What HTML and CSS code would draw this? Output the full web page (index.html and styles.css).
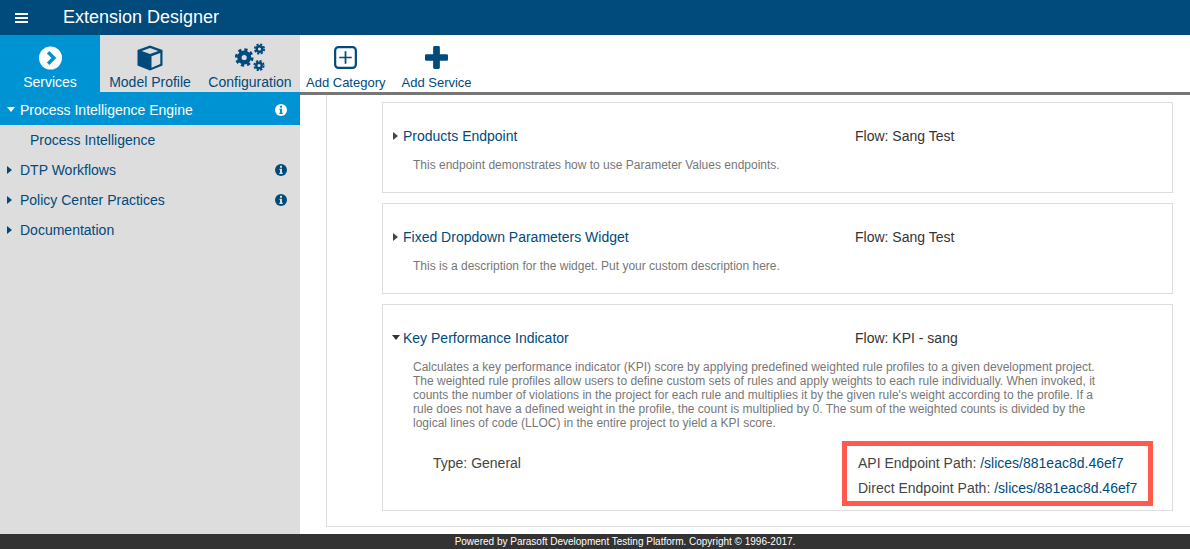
FILE: index.html
```html
<!DOCTYPE html>
<html lang="en">
<head>
<meta charset="utf-8">
<title>Extension Designer</title>
<link rel="stylesheet" href="styles.css">
</head>
<body>
<div class="app">
  <header class="topbar">
    <svg class="burger" viewBox="0 0 13 10" width="13" height="10"><path d="M0 0h13v2H0zM0 4h13v2H0zM0 8h13v2H0z" fill="#fff"/></svg>
    <h1 class="app-title">Extension Designer</h1>
  </header>
  <div class="workspace">
    <aside class="sidebar">
      <nav class="tabs">
        <a class="tab tab-active">
          <svg class="tab-icon" viewBox="0 0 24 24" width="23" height="23"><circle cx="12" cy="12" r="12" fill="#fff"/><path d="M9.500 6l6 6-6 6" fill="none" stroke="#0093d3" stroke-width="3.600"/></svg>
          <span>Services</span>
        </a>
        <a class="tab">
          <svg class="tab-icon" viewBox="0 0 26 26" width="26" height="26"><path d="M13 .5L25.500 5V20.500L13 25.500 .5 20.500V5z" fill="#004a7c"/><path d="M13 3L21.300 6 13 9 4.700 6z" fill="#ddd"/><path d="M14.500 11.300L23.300 8V19L14.500 22.800z" fill="#ddd"/></svg>
          <span>Model Profile</span>
        </a>
        <a class="tab">
          <svg class="tab-icon tab-icon-cogs" viewBox="0 0 30 26" width="30" height="26"><g fill="none" stroke="#004a7c"><circle cx="9.200" cy="12.500" r="4.800" stroke-width="4.400"/><circle cx="9.200" cy="12.500" r="7.900" stroke-width="2.800" stroke-dasharray="3.200 2.990"/><circle cx="24.500" cy="4" r="2.800" stroke-width="2.400"/><circle cx="24.500" cy="4" r="4.700" stroke-width="1.800" stroke-dasharray="2.200 1.490"/><circle cx="24" cy="20.500" r="2.800" stroke-width="2.400"/><circle cx="24" cy="20.500" r="4.700" stroke-width="1.800" stroke-dasharray="2.200 1.490"/></g></svg>
          <span>Configuration</span>
        </a>
      </nav>
      <ul class="tree">
        <li class="tree-row tree-row-active">
          <span class="caret caret-down caret-white"></span>
          <span class="tree-label">Process Intelligence Engine</span>
          <svg class="info" viewBox="0 0 12 12" width="12" height="12"><circle cx="6" cy="6" r="6" fill="#fff"/><path d="M5 1.800h2v2H5zM4.500 4.800h2.500v4h.8v1.200H4.300V8.800H5V6H4.500z" fill="#0093d3"/></svg>
        </li>
        <li class="tree-row tree-child"><span class="tree-label">Process Intelligence</span></li>
        <li class="tree-row">
          <span class="caret caret-right"></span>
          <span class="tree-label">DTP Workflows</span>
          <svg class="info" viewBox="0 0 12 12" width="12" height="12"><circle cx="6" cy="6" r="6" fill="#004a7c"/><path d="M5 1.800h2v2H5zM4.500 4.800h2.500v4h.8v1.200H4.300V8.800H5V6H4.500z" fill="#ddd"/></svg>
        </li>
        <li class="tree-row">
          <span class="caret caret-right"></span>
          <span class="tree-label">Policy Center Practices</span>
          <svg class="info" viewBox="0 0 12 12" width="12" height="12"><circle cx="6" cy="6" r="6" fill="#004a7c"/><path d="M5 1.800h2v2H5zM4.500 4.800h2.500v4h.8v1.200H4.300V8.800H5V6H4.500z" fill="#ddd"/></svg>
        </li>
        <li class="tree-row">
          <span class="caret caret-right"></span>
          <span class="tree-label">Documentation</span>
        </li>
      </ul>
    </aside>
    <main class="main">
      <div class="toolbar">
        <a class="tool">
          <svg class="tool-icon" viewBox="0 0 24 24" width="23" height="23"><rect x="1.200" y="1.200" width="21.600" height="21.600" rx="3.500" fill="none" stroke="#004a7c" stroke-width="2.300"/><path d="M12 5.500v13M5.500 12h13" stroke="#004a7c" stroke-width="1.800"/></svg>
          <span>Add Category</span>
        </a>
        <a class="tool">
          <svg class="tool-icon" viewBox="0 0 24 24" width="23" height="23"><path d="M8.500 1.500A1.500 1.500 0 0 1 10 0h4a1.500 1.500 0 0 1 1.500 1.500V8.500H22.500A1.500 1.500 0 0 1 24 10v4a1.500 1.500 0 0 1-1.500 1.500H15.500V22.500A1.500 1.500 0 0 1 14 24h-4a1.500 1.500 0 0 1-1.500-1.500V15.500H1.500A1.500 1.500 0 0 1 0 14v-4A1.500 1.500 0 0 1 1.500 8.500H8.500z" fill="#004a7c"/></svg>
          <span>Add Service</span>
        </a>
      </div>
      <section class="panel">
        <article class="card">
          <div class="card-head">
            <span class="card-title"><span class="caret caret-right caret-dark"></span>Products Endpoint</span>
            <span class="card-flow">Flow: Sang Test</span>
          </div>
          <p class="card-desc">This endpoint demonstrates how to use Parameter Values endpoints.</p>
        </article>
        <article class="card">
          <div class="card-head">
            <span class="card-title"><span class="caret caret-right caret-dark"></span>Fixed Dropdown Parameters Widget</span>
            <span class="card-flow">Flow: Sang Test</span>
          </div>
          <p class="card-desc">This is a description for the widget. Put your custom description here.</p>
        </article>
        <article class="card card-open">
          <div class="card-head">
            <span class="card-title"><span class="caret caret-down caret-dark"></span>Key Performance Indicator</span>
            <span class="card-flow">Flow: KPI - sang</span>
          </div>
          <p class="card-desc">Calculates a key performance indicator (KPI) score by applying predefined weighted rule profiles to a given development project.<br>The weighted rule profiles allow users to define custom sets of rules and apply weights to each rule individually. When invoked, it<br>counts the number of violations in the project for each rule and multiplies it by the given rule's weight according to the profile. If a<br>rule does not have a defined weight in the profile, the count is multiplied by 0. The sum of the weighted counts is divided by the<br>logical lines of code (LLOC) in the entire project to yield a KPI score.</p>
          <div class="card-meta">
            <span class="meta-type">Type: General</span>
            <div class="meta-paths">
              <div class="meta-path">API Endpoint Path: <a class="path-link">/slices/881eac8d.46ef7</a></div>
              <div class="meta-path">Direct Endpoint Path: <a class="path-link">/slices/881eac8d.46ef7</a></div>
            </div>
          </div>
          <div class="highlight"></div>
        </article>
      </section>
    </main>
  </div>
  <footer class="footer">Powered by Parasoft Development Testing Platform. Copyright © 1996-2017.</footer>
</div>
</body>
</html>
```
FILE: styles.css
```css
* { box-sizing: border-box; }
html, body { margin: 0; padding: 0; height: 100%; overflow: hidden; }
body { font-family: "Liberation Sans", Arial, sans-serif; font-size: 14px; color: #004a7c; background: #fff; }
.app { display: flex; flex-direction: column; height: 549px; }

.topbar { flex: 0 0 35px; background: #004a7c; display: flex; align-items: center; padding-left: 15px; }
.burger { display: block; }
.app-title { margin: 0 0 0 35px; font-size: 18px; font-weight: 400; color: #fff; line-height: 35px; }

.workspace { flex: 1; display: flex; min-height: 0; }

.sidebar { flex: 0 0 300px; background: #ddd; }
.tabs { display: flex; height: 57px; }
.tab { flex: 0 0 100px; display: flex; flex-direction: column; align-items: center; padding-top: 10px; color: #004a7c; }
.tab-active { background: #0093d3; color: #fff; }
.tab-icon { display: block; height: 26px; overflow: visible; }
.tab span { display: block; margin-top: 3px; line-height: 16px; }

.tree { list-style: none; margin: 0; padding: 0; }
.tree-row { height: 30px; display: flex; align-items: center; padding-left: 6px; }
.tree-row-active { height: 33px; padding-top: 2px; background: #0093d3; color: #fff; }
.tree-child { padding-left: 30px; }
.tree-row .caret { margin-right: 8px; }
.tree-row .caret-down { margin-left: 1px; margin-right: 5px; }
.tree-label { flex: 1; }
.info { margin-right: 13px; display: block; }

.caret { display: inline-block; width: 0; height: 0; flex: none; }
.caret-right { border-top: 4px solid transparent; border-bottom: 4px solid transparent; border-left: 5px solid #004a7c; margin-left: 1px; }
.caret-down { border-left: 4px solid transparent; border-right: 4px solid transparent; border-top: 5px solid #333; }
.caret-white { border-top-color: #fff; }
.caret-dark.caret-right { border-left-color: #444; margin-left: 0; }
.caret-dark.caret-down { border-top-color: #333; }

.main { flex: 1; display: flex; flex-direction: column; min-width: 0; }
.toolbar { flex: 0 0 60px; display: flex; border-bottom: 3px solid #777; padding-left: 6px; gap: 16px; }
.tool { display: flex; flex-direction: column; align-items: center; padding-top: 10px; color: #004a7c; font-size: 13px; }
.tool-icon { display: block; margin: 1px 0 2px; }
.tool span { margin-top: 4px; line-height: 16px; }

.panel { margin-left: 26px; height: 432px; padding: 7px 17px 0 55px; border-left: 1px solid #ddd; border-bottom: 1px solid #ddd; display: flex; flex-direction: column; gap: 10px; }
.card { border: 1px solid #ddd; height: 91px; padding: 25px 0 0 10px; position: relative; flex: none; }
.card-open { height: 207px; }
.card-head { display: flex; line-height: 16px; }
.card-title { flex: 0 0 462px; display: flex; align-items: center; }
.card-title .caret { margin-right: 5px; }
.card-title .caret-down { margin-left: -1px; margin-right: 3px; margin-top: -1px; }
.card-flow { color: #333; }
.card-desc { margin: 14px 0 0 20px; font-size: 12px; line-height: 14px; color: #777; }
.card-meta { display: flex; margin-top: 25px; color: #444; }
.meta-type { flex: 0 0 425px; margin-left: 40px; line-height: 16px; }
.meta-path { line-height: 16px; margin-bottom: 9px; }
.path-link { color: #004a7c; }
.highlight { position: absolute; left: 459px; top: 136px; width: 311px; height: 65px; border: 5px solid #ff5a4d; }

.footer { flex: 0 0 15px; background: #333; color: #fff; font-size: 10px; line-height: 15px; text-align: center; padding-left: 60px; }
```
